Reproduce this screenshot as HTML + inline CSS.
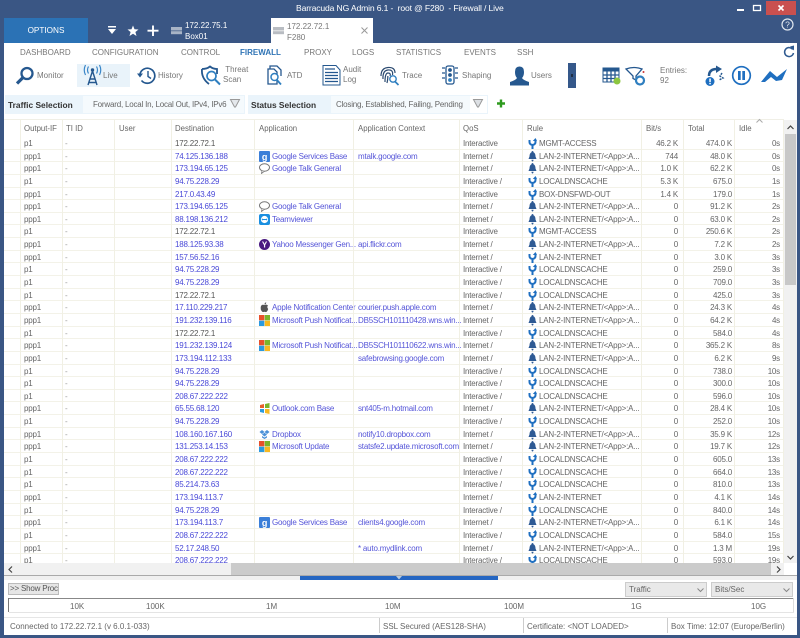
<!DOCTYPE html>
<html><head><meta charset="utf-8"><title>Barracuda NG Admin</title>
<style>
html,body{margin:0;padding:0;width:800px;height:638px;overflow:hidden;background:#3a5684}
body{position:relative;font-family:"Liberation Sans",sans-serif;font-size:8px;color:#666}
.a{position:absolute;white-space:nowrap}
svg{position:absolute;overflow:visible}
#main{position:absolute;left:4px;top:43px;width:793px;height:592px;background:#fff}
.m{position:absolute;top:48px;font-size:8px;color:#777;white-space:nowrap}
.t{position:absolute;font-size:8px;color:#777;white-space:nowrap;line-height:11px}
.v{position:absolute;top:120px;width:1px;height:443px;background:#f1f0e4}
.h{position:absolute;top:124px;font-size:7.8px;color:#666;white-space:nowrap}
#rows{position:absolute;left:0;top:137px;width:783px;height:426px;overflow:hidden;clip-path:inset(0 0 0 4px)}
.r{position:relative;height:12.65px;box-sizing:border-box;border-bottom:1px solid #f3f2e8;line-height:12px;font-size:8px;letter-spacing:-.2px;color:#666;width:783px;white-space:nowrap}
.r span{position:absolute;top:1px;white-space:nowrap}
.o{left:24px}.d{left:65px;color:#999}.i{left:175px;color:#4a4ad8}.k{left:175px;color:#555}
.p{left:272px;color:#5555d8}.c{left:358px;color:#5555d8}.q{left:463px}.u{left:539px}
.b{right:105px;color:#666}.g{right:51px}.e{right:3px}
.ri{position:absolute;left:528px;top:1px;width:9px;height:11px}
.ai{position:absolute;left:259px;top:1px;width:11px;height:11px}
.s{position:absolute;color:#666;font-size:8px;white-space:nowrap}
</style></head><body>
<svg width="0" height="0" style="position:absolute"><defs>
<symbol id="fork" viewBox="0 0 9 11"><path d="M1.500 2V4Q1.500 6.500 4.500 7V11M7.500 1.500V4Q7.500 6.500 4.500 7" fill="none" stroke="#1f6fc0" stroke-width="2"/><path d="M4.800 3 7.500 0 9 3Z" fill="#1f6fc0"/></symbol>
<symbol id="bell" viewBox="0 0 9 11"><path d="M4.500 0Q5.500 0 5.500 1.200 7.500 2 7.500 5.500L8.500 8H.5L1.500 5.500Q1.500 2 3.500 1.200 3.500 0 4.500 0ZM3.500 8.800H5.500Q5.500 10.500 4.500 10.500T3.500 8.800Z" fill="#2e5a94"/></symbol>
<symbol id="g" viewBox="0 0 11 11"><rect width="11" height="11" rx="1" fill="#3b7fd8"/><text x="5.500" y="9" font-size="9" font-weight="bold" fill="#fff" text-anchor="middle" font-family="Liberation Sans">g</text></symbol>
<symbol id="talk" viewBox="0 0 11 11"><ellipse cx="5.500" cy="4.500" rx="5" ry="3.700" fill="#fff" stroke="#777"/><path d="M3 8 2.500 10.500 5.500 8.200" fill="#fff" stroke="#777" stroke-width=".8"/></symbol>
<symbol id="ms" viewBox="0 0 11 11"><rect width="5.300" height="5.300" fill="#e8502a"/><rect x="5.700" width="5.300" height="5.300" fill="#7ab52a"/><rect y="5.700" width="5.300" height="5.300" fill="#2a9ae0"/><rect x="5.700" y="5.700" width="5.300" height="5.300" fill="#f8b820"/></symbol>
<symbol id="tv" viewBox="0 0 11 11"><rect width="11" height="11" rx="2" fill="#1a8fe0"/><circle cx="5.500" cy="5.500" r="3.600" fill="#fff"/><path d="M2.500 5.500 4 4.400V5H7V4.400L8.500 5.500 7 6.600V6H4V6.600Z" fill="#1a8fe0"/></symbol>
<symbol id="y" viewBox="0 0 11 11"><circle cx="5.500" cy="5.500" r="5.500" fill="#4a1a80"/><text x="5.500" y="8.500" font-size="8" font-weight="bold" fill="#fff" text-anchor="middle" font-family="Liberation Sans">Y</text></symbol>
<symbol id="ap" viewBox="0 0 11 11"><path d="M5.500 3Q7.500 2 9 3.500 7.500 5 9.200 7 8 10.500 6.500 10 5.500 9.500 4.500 10 3 10.500 1.800 7.500 1.200 3.500 3.500 2.800 4.500 2.700 5.500 3ZM5.500 2.500Q5.500 .8 7.200 .3 7.300 2.200 5.500 2.500Z" fill="#555"/></symbol>
<symbol id="ol" viewBox="0 0 11 11"><path d="M1 2 5 1V5H1Z" fill="#e8602a"/><path d="M6 1 10.500 0V5H6Z" fill="#7ab52a"/><path d="M1 6H5V10L1 9Z" fill="#2a9ae0"/><path d="M6 6H10.500V11L6 10Z" fill="#f8b820"/></symbol>
<symbol id="db" viewBox="0 0 11 11"><path d="M3 1 5.500 3 3 5 .5 3ZM8 1 10.500 3 8 5 5.500 3ZM3 5.500 5.500 3.800 8 5.500 5.500 7.500ZM3 7 5.500 8.500 8 7V8.500L5.500 10 3 8.500Z" fill="#4a90d8"/></symbol>
</defs></svg>

<!-- title bar -->
<div class="a" style="left:296px;top:3px;font-size:8.600px;letter-spacing:-.15px;color:#fff">Barracuda NG Admin 6.1 -&nbsp; root @ F280&nbsp; - Firewall / Live</div>
<div class="a" style="left:766px;top:1px;width:30px;height:14px;background:#c9504f"></div>
<svg style="left:736px;top:5px" width="50" height="8" viewBox="0 0 50 8"><rect x="1" y="4" width="7" height="2" fill="#fff"/><rect x="17.500" y="0.500" width="7" height="5" fill="none" stroke="#fff" stroke-width="1.300"/><path d="M42.500 .5 47.500 5.500M47.500 .5 42.500 5.500" stroke="#fff" stroke-width="1.600"/></svg>
<svg style="left:781px;top:18px" width="13" height="13" viewBox="0 0 13 13"><circle cx="6.500" cy="6.500" r="5.500" fill="none" stroke="#dfe6ee" stroke-width="1.200"/><text x="6.500" y="9.700" font-size="8.500" fill="#dfe6ee" text-anchor="middle">?</text></svg>

<!-- tabs -->
<div class="a" style="left:4px;top:18px;width:84px;height:25px;background:#2b72b5;color:#fff;text-align:center;line-height:25px;font-size:8.200px">OPTIONS</div>
<svg style="left:107px;top:25px" width="54" height="12" viewBox="0 0 54 12"><path d="M1 1H9V2.500H1ZM1 4H9L5 9Z" fill="#fff"/><path d="M26 .5 27.500 4.300 31.500 4.500 28.400 7 29.500 11 26 8.800 22.500 11 23.600 7 20.500 4.500 24.500 4.300Z" fill="#fff"/><path d="M46 .5V11M40.500 5.700H51.500" stroke="#fff" stroke-width="1.900"/></svg>
<svg style="left:171px;top:26px" width="11" height="9" viewBox="0 0 11 9"><rect width="11" height="3.500" y="1" fill="#a8b4c6"/><rect width="11" height="3" y="5.200" fill="#a8b4c6"/></svg>
<div class="t" style="left:185px;top:20px;color:#fff">172.22.75.1<br>Box01</div>
<div class="a" style="left:271px;top:18px;width:102px;height:25px;background:#fff"></div>
<svg style="left:273px;top:26px" width="11" height="9" viewBox="0 0 11 9"><rect width="11" height="3.500" y="1" fill="#b8bcc2"/><rect width="11" height="3" y="5.200" fill="#b8bcc2"/></svg>
<div class="t" style="left:287px;top:21px;color:#777">172.22.72.1<br>F280</div>
<svg style="left:361px;top:27px" width="7" height="7" viewBox="0 0 7 7"><path d="M.5 .5 6.500 6.500M6.500 .5 .5 6.500" stroke="#999" stroke-width="1"/></svg>

<div id="main"></div>

<!-- menu -->
<div class="m" style="left:20px">DASHBOARD</div>
<div class="m" style="left:92px">CONFIGURATION</div>
<div class="m" style="left:181px">CONTROL</div>
<div class="m" style="left:240px;color:#2f74b5;font-weight:bold">FIREWALL</div>
<div class="m" style="left:304px">PROXY</div>
<div class="m" style="left:352px">LOGS</div>
<div class="m" style="left:396px">STATISTICS</div>
<div class="m" style="left:464px">EVENTS</div>
<div class="m" style="left:517px">SSH</div>
<svg style="left:783px;top:45px" width="12" height="13" viewBox="0 0 12 13"><path d="M9.800 4.500A4.500 4.500 0 1 0 10.500 8" fill="none" stroke="#2f5a90" stroke-width="1.500"/><path d="M7 1.500 11 .5V5.500Z" fill="#2f5a90"/></svg>

<!-- toolbar -->
<div class="a" style="left:77px;top:64px;width:53px;height:23px;background:#e9f3fa"></div>
<svg style="left:15px;top:66px" width="20" height="20" viewBox="0 0 20 20"><circle cx="12" cy="7.500" r="5.500" fill="none" stroke="#25588f" stroke-width="2.300"/><path d="M8 11.500 2 17.500" stroke="#25588f" stroke-width="3.200"/></svg>
<div class="t" style="left:37px;top:70px">Monitor</div>
<svg style="left:83px;top:65px" width="19" height="21" viewBox="0 0 19 21"><path d="M9.500 6 5 20M9.500 6 14 20M7 14H12M6 17.500H13" fill="none" stroke="#25588f" stroke-width="1.400"/><circle cx="9.500" cy="5" r="1.700" fill="#25588f"/><path d="M5.500 1.500Q3.500 5 5.500 8.500M13.500 1.500Q15.500 5 13.500 8.500M2.500 0Q0 5 2.500 10M16.500 0Q19 5 16.500 10" fill="none" stroke="#3a86c8" stroke-width="1.200"/></svg>
<div class="t" style="left:103px;top:70px">Live</div>
<svg style="left:137px;top:66px" width="20" height="20" viewBox="0 0 20 20"><path d="M3 8A7.500 7.500 0 1 1 4.500 14.500" fill="none" stroke="#25588f" stroke-width="1.700"/><path d="M0 7.500H6L3 11.500Z" fill="#25588f"/><path d="M11 5V10.500L14 12.500" fill="none" stroke="#25588f" stroke-width="1.400"/></svg>
<div class="t" style="left:158px;top:70px">History</div>
<svg style="left:201px;top:66px" width="21" height="20" viewBox="0 0 21 20"><path d="M1 3Q6 3 9 .5 12 3 16 3V8" fill="none" stroke="#25588f" stroke-width="1.800"/><path d="M1 3Q0 12 8 18" fill="none" stroke="#25588f" stroke-width="1.800"/><circle cx="10.500" cy="10" r="4.500" fill="none" stroke="#2f7fc0" stroke-width="1.700"/><path d="M14 13.500 19 18.500" stroke="#2f7fc0" stroke-width="2"/></svg>
<div class="t" style="left:223px;top:65px;line-height:10px">&nbsp;Threat<br>Scan</div>
<svg style="left:266px;top:65px" width="18" height="21" viewBox="0 0 18 21"><path d="M4 4V1H11L15 5V11M2 4H8L11 7V19H2Z" fill="none" stroke="#25588f" stroke-width="1.300"/><circle cx="8.500" cy="12" r="3.500" fill="#fff" stroke="#2f7fc0" stroke-width="1.500"/><path d="M11 15 15 19.500" stroke="#2f7fc0" stroke-width="1.800"/></svg>
<div class="t" style="left:287px;top:70px">ATD</div>
<svg style="left:322px;top:65px" width="19" height="21" viewBox="0 0 19 21"><path d="M1 .5H14L18 5V20H1Z" fill="#fff" stroke="#25588f" stroke-width="1"/><path d="M3 4H13M3 7.500H16M3 10.500H16M3 13.500H16M3 16.500H16" stroke="#25588f" stroke-width="1.200"/></svg>
<div class="t" style="left:343px;top:65px;line-height:10px">Audit<br>Log</div>
<svg style="left:380px;top:66px" width="20" height="20" viewBox="0 0 20 20"><path d="M1 10Q1 2 8 1.500T15 7M3 13Q2.500 4.500 8 4T12.500 9M5 16Q5 7 8 7T10 10M7 17Q8 13 7.800 10" fill="none" stroke="#2b4a70" stroke-width="1.200"/><circle cx="13" cy="13" r="3.200" fill="#fff" stroke="#2f7fc0" stroke-width="1.400"/><path d="M15 15.500 18.500 19" stroke="#2f7fc0" stroke-width="1.700"/></svg>
<div class="t" style="left:402px;top:70px">Trace</div>
<svg style="left:441px;top:65px" width="18" height="20" viewBox="0 0 18 20"><rect x="5" y="1" width="8" height="18" rx="2" fill="#fff" stroke="#25588f" stroke-width="1.300"/><circle cx="9" cy="5" r="1.900" fill="#25588f"/><circle cx="9" cy="10" r="1.900" fill="#25588f"/><circle cx="9" cy="15" r="1.900" fill="#2f7fc0"/><path d="M1 3H4M1 8H4M1 13H4M14 3H17M14 8H17M14 13H17" stroke="#25588f" stroke-width="1.200"/></svg>
<div class="t" style="left:462px;top:70px">Shaping</div>
<svg style="left:509px;top:66px" width="21" height="20" viewBox="0 0 21 20"><path d="M10.500 .5Q15 .5 15 6 15 10 13 12 14 14 20 16V19.500H1V16Q7 14 8 12 6 10 6 6 6 .5 10.500 .5Z" fill="#25588f"/></svg>
<div class="t" style="left:531px;top:70px">Users</div>
<div class="a" style="left:568px;top:63px;width:8px;height:25px;background:#35588a"></div>
<div class="a" style="left:571px;top:74px;width:2px;height:3px;background:#1e2e44"></div>
<svg style="left:602px;top:67px" width="19" height="18" viewBox="0 0 19 18"><rect x="1" y="1" width="16" height="14" fill="#fff" stroke="#25588f"/><rect x="1" y="1" width="16" height="3.500" fill="#25588f"/><path d="M1 8H17M1 11.500H17M5 4V15M9 4V15M13 4V15" stroke="#25588f" stroke-width="1.300"/><circle cx="15" cy="14" r="3.500" fill="#8cc63f"/></svg>
<svg style="left:625px;top:67px" width="21" height="20" viewBox="0 0 21 20"><path d="M1 2Q9 -1 17 2L11 9V13L8 11.500V9Z" fill="#fff" stroke="#25588f" stroke-width="1.300"/><circle cx="15" cy="13.500" r="4" fill="#fff" stroke="#2f7fc0" stroke-width="2.200"/><circle cx="18.500" cy="5" r="1" fill="#c33"/></svg>
<div class="t" style="left:660px;top:66px;line-height:9.500px">Entries:<br>92</div>
<svg style="left:705px;top:65px" width="20" height="22" viewBox="0 0 20 22"><path d="M4 11Q4 4 12 4" fill="none" stroke="#25588f" stroke-width="2.500"/><path d="M11 .5 17 4 11 8Z" fill="#25588f"/><circle cx="5" cy="16.500" r="4.500" fill="#1f6fc0"/><rect x="4.300" y="13.500" width="1.500" height="3.700" fill="#fff"/><rect x="4.300" y="18" width="1.500" height="1.300" fill="#fff"/><path d="M17 8 15 11 18 13 14 15" fill="none" stroke="#25588f" stroke-width="1.500" stroke-dasharray="2 1"/></svg>
<svg style="left:731px;top:65px" width="21" height="21" viewBox="0 0 21 21"><circle cx="10.500" cy="10.500" r="8.800" fill="none" stroke="#1f6fc0" stroke-width="1.700"/><rect x="7" y="6" width="2.700" height="9" fill="#1f6fc0"/><rect x="11.300" y="6" width="2.700" height="9" fill="#1f6fc0"/></svg>
<svg style="left:761px;top:68px" width="27" height="15" viewBox="0 0 27 15"><path d="M0 14 9 3 16 9 26 1 21 12 15 13 10 9 4 14Z" fill="#1f6fc0"/></svg>

<!-- selection bars -->
<div class="a" style="left:5px;top:95px;width:240px;height:19px;background:#eaf4fb"></div>
<div class="a" style="left:248px;top:95px;width:240px;height:19px;background:#eaf4fb"></div>
<div class="a" style="left:83px;top:96px;width:161px;height:17px;background:#f5fafd"></div>
<div class="a" style="left:331px;top:96px;width:139px;height:17px;background:#f5fafd"></div>
<div class="a" style="left:470px;top:96px;width:17px;height:17px;background:#fff"></div>
<div class="a" style="left:8px;top:100px;font-size:8.400px;font-weight:bold;color:#333">Traffic Selection</div>
<div class="a" style="left:251px;top:100px;font-size:8.400px;font-weight:bold;color:#333">Status Selection</div>
<div class="a" style="left:93px;top:100px;font-size:8px;letter-spacing:-.2px;color:#666">Forward, Local In, Local Out, IPv4, IPv6</div>
<div class="a" style="left:336px;top:100px;font-size:8px;letter-spacing:-.2px;color:#666">Closing, Established, Failing, Pending</div>
<svg style="left:230px;top:99px" width="10" height="9" viewBox="0 0 10 9"><path d="M.5 .5H9.500L5.500 8H4.500Z" fill="#e4e8ec" stroke="#999"/></svg>
<svg style="left:473px;top:99px" width="10" height="9" viewBox="0 0 10 9"><path d="M.5 .5H9.500L5.500 8H4.500Z" fill="#dde0e4" stroke="#999"/></svg>
<svg style="left:497px;top:99px" width="8" height="9" viewBox="0 0 8 9"><path d="M2.800 .5H5.200V3.200H8V5.800H5.200V8.500H2.800V5.800H0V3.200H2.800Z" fill="#2e9a1e"/></svg>

<!-- grid head -->
<div class="a" style="left:4px;top:119px;width:780px;height:1px;background:#f0efe6"></div>
<div class="h" style="left:24px">Output-IF</div>
<div class="h" style="left:66px">TI ID</div>
<div class="h" style="left:119px">User</div>
<div class="h" style="left:175px">Destination</div>
<div class="h" style="left:259px">Application</div>
<div class="h" style="left:358px">Application Context</div>
<div class="h" style="left:463px">QoS</div>
<div class="h" style="left:527px">Rule</div>
<div class="h" style="left:646px">Bit/s</div>
<div class="h" style="left:688px">Total</div>
<div class="h" style="left:739px">Idle</div>
<svg style="left:756px;top:119px" width="7" height="4" viewBox="0 0 7 4"><path d="M.5 3.500 3.500 .5 6.500 3.500" fill="none" stroke="#aaa"/></svg>

<div id="rows">
<div class="r"><span class="o">p1</span><span class="d">-</span><span class="k">172.22.72.1</span><span class="q">Interactive</span><svg class="ri"><use href="#fork"/></svg><span class="u">MGMT-ACCESS</span><span class="b">46.2 K</span><span class="g">474.0 K</span><span class="e">0s</span></div>
<div class="r"><span class="o">ppp1</span><span class="d">-</span><span class="i">74.125.136.188</span><svg class="ai"><use href="#g"/></svg><span class="p">Google Services Base</span><span class="c">mtalk.google.com</span><span class="q">Internet /</span><svg class="ri"><use href="#bell"/></svg><span class="u">LAN-2-INTERNET/&lt;App&gt;:A...</span><span class="b">744</span><span class="g">48.0 K</span><span class="e">0s</span></div>
<div class="r"><span class="o">ppp1</span><span class="d">-</span><span class="i">173.194.65.125</span><svg class="ai"><use href="#talk"/></svg><span class="p">Google Talk General</span><span class="q">Internet /</span><svg class="ri"><use href="#bell"/></svg><span class="u">LAN-2-INTERNET/&lt;App&gt;:A...</span><span class="b">1.0 K</span><span class="g">62.2 K</span><span class="e">0s</span></div>
<div class="r"><span class="o">p1</span><span class="d">-</span><span class="i">94.75.228.29</span><span class="q">Interactive /</span><svg class="ri"><use href="#fork"/></svg><span class="u">LOCALDNSCACHE</span><span class="b">5.3 K</span><span class="g">675.0</span><span class="e">1s</span></div>
<div class="r"><span class="o">ppp1</span><span class="d">-</span><span class="i">217.0.43.49</span><span class="q">Interactive</span><svg class="ri"><use href="#fork"/></svg><span class="u">BOX-DNSFWD-OUT</span><span class="b">1.4 K</span><span class="g">179.0</span><span class="e">1s</span></div>
<div class="r"><span class="o">ppp1</span><span class="d">-</span><span class="i">173.194.65.125</span><svg class="ai"><use href="#talk"/></svg><span class="p">Google Talk General</span><span class="q">Internet /</span><svg class="ri"><use href="#bell"/></svg><span class="u">LAN-2-INTERNET/&lt;App&gt;:A...</span><span class="b">0</span><span class="g">91.2 K</span><span class="e">2s</span></div>
<div class="r"><span class="o">ppp1</span><span class="d">-</span><span class="i">88.198.136.212</span><svg class="ai"><use href="#tv"/></svg><span class="p">Teamviewer</span><span class="q">Internet /</span><svg class="ri"><use href="#bell"/></svg><span class="u">LAN-2-INTERNET/&lt;App&gt;:A...</span><span class="b">0</span><span class="g">63.0 K</span><span class="e">2s</span></div>
<div class="r"><span class="o">p1</span><span class="d">-</span><span class="k">172.22.72.1</span><span class="q">Interactive</span><svg class="ri"><use href="#fork"/></svg><span class="u">MGMT-ACCESS</span><span class="b">0</span><span class="g">250.6 K</span><span class="e">2s</span></div>
<div class="r"><span class="o">ppp1</span><span class="d">-</span><span class="i">188.125.93.38</span><svg class="ai"><use href="#y"/></svg><span class="p">Yahoo Messenger Gen...</span><span class="c">api.flickr.com</span><span class="q">Internet /</span><svg class="ri"><use href="#bell"/></svg><span class="u">LAN-2-INTERNET/&lt;App&gt;:A...</span><span class="b">0</span><span class="g">7.2 K</span><span class="e">2s</span></div>
<div class="r"><span class="o">ppp1</span><span class="d">-</span><span class="i">157.56.52.16</span><span class="q">Internet /</span><svg class="ri"><use href="#fork"/></svg><span class="u">LAN-2-INTERNET</span><span class="b">0</span><span class="g">3.0 K</span><span class="e">3s</span></div>
<div class="r"><span class="o">p1</span><span class="d">-</span><span class="i">94.75.228.29</span><span class="q">Interactive /</span><svg class="ri"><use href="#fork"/></svg><span class="u">LOCALDNSCACHE</span><span class="b">0</span><span class="g">259.0</span><span class="e">3s</span></div>
<div class="r"><span class="o">p1</span><span class="d">-</span><span class="i">94.75.228.29</span><span class="q">Interactive /</span><svg class="ri"><use href="#fork"/></svg><span class="u">LOCALDNSCACHE</span><span class="b">0</span><span class="g">709.0</span><span class="e">3s</span></div>
<div class="r"><span class="o">p1</span><span class="d">-</span><span class="k">172.22.72.1</span><span class="q">Interactive /</span><svg class="ri"><use href="#fork"/></svg><span class="u">LOCALDNSCACHE</span><span class="b">0</span><span class="g">425.0</span><span class="e">3s</span></div>
<div class="r"><span class="o">ppp1</span><span class="d">-</span><span class="i">17.110.229.217</span><svg class="ai"><use href="#ap"/></svg><span class="p">Apple Notification Center</span><span class="c">courier.push.apple.com</span><span class="q">Internet /</span><svg class="ri"><use href="#bell"/></svg><span class="u">LAN-2-INTERNET/&lt;App&gt;:A...</span><span class="b">0</span><span class="g">24.3 K</span><span class="e">4s</span></div>
<div class="r"><span class="o">ppp1</span><span class="d">-</span><span class="i">191.232.139.116</span><svg class="ai"><use href="#ms"/></svg><span class="p">Microsoft Push Notificat...</span><span class="c">DB5SCH101110428.wns.win...</span><span class="q">Internet /</span><svg class="ri"><use href="#bell"/></svg><span class="u">LAN-2-INTERNET/&lt;App&gt;:A...</span><span class="b">0</span><span class="g">64.2 K</span><span class="e">4s</span></div>
<div class="r"><span class="o">p1</span><span class="d">-</span><span class="k">172.22.72.1</span><span class="q">Interactive /</span><svg class="ri"><use href="#fork"/></svg><span class="u">LOCALDNSCACHE</span><span class="b">0</span><span class="g">584.0</span><span class="e">4s</span></div>
<div class="r"><span class="o">ppp1</span><span class="d">-</span><span class="i">191.232.139.124</span><svg class="ai"><use href="#ms"/></svg><span class="p">Microsoft Push Notificat...</span><span class="c">DB5SCH101110622.wns.win...</span><span class="q">Internet /</span><svg class="ri"><use href="#bell"/></svg><span class="u">LAN-2-INTERNET/&lt;App&gt;:A...</span><span class="b">0</span><span class="g">365.2 K</span><span class="e">8s</span></div>
<div class="r"><span class="o">ppp1</span><span class="d">-</span><span class="i">173.194.112.133</span><span class="c">safebrowsing.google.com</span><span class="q">Internet /</span><svg class="ri"><use href="#bell"/></svg><span class="u">LAN-2-INTERNET/&lt;App&gt;:A...</span><span class="b">0</span><span class="g">6.2 K</span><span class="e">9s</span></div>
<div class="r"><span class="o">p1</span><span class="d">-</span><span class="i">94.75.228.29</span><span class="q">Interactive /</span><svg class="ri"><use href="#fork"/></svg><span class="u">LOCALDNSCACHE</span><span class="b">0</span><span class="g">738.0</span><span class="e">10s</span></div>
<div class="r"><span class="o">p1</span><span class="d">-</span><span class="i">94.75.228.29</span><span class="q">Interactive /</span><svg class="ri"><use href="#fork"/></svg><span class="u">LOCALDNSCACHE</span><span class="b">0</span><span class="g">300.0</span><span class="e">10s</span></div>
<div class="r"><span class="o">p1</span><span class="d">-</span><span class="i">208.67.222.222</span><span class="q">Interactive /</span><svg class="ri"><use href="#fork"/></svg><span class="u">LOCALDNSCACHE</span><span class="b">0</span><span class="g">596.0</span><span class="e">10s</span></div>
<div class="r"><span class="o">ppp1</span><span class="d">-</span><span class="i">65.55.68.120</span><svg class="ai"><use href="#ol"/></svg><span class="p">Outlook.com Base</span><span class="c">snt405-m.hotmail.com</span><span class="q">Internet /</span><svg class="ri"><use href="#bell"/></svg><span class="u">LAN-2-INTERNET/&lt;App&gt;:A...</span><span class="b">0</span><span class="g">28.4 K</span><span class="e">10s</span></div>
<div class="r"><span class="o">p1</span><span class="d">-</span><span class="i">94.75.228.29</span><span class="q">Interactive /</span><svg class="ri"><use href="#fork"/></svg><span class="u">LOCALDNSCACHE</span><span class="b">0</span><span class="g">252.0</span><span class="e">10s</span></div>
<div class="r"><span class="o">ppp1</span><span class="d">-</span><span class="i">108.160.167.160</span><svg class="ai"><use href="#db"/></svg><span class="p">Dropbox</span><span class="c">notify10.dropbox.com</span><span class="q">Internet /</span><svg class="ri"><use href="#bell"/></svg><span class="u">LAN-2-INTERNET/&lt;App&gt;:A...</span><span class="b">0</span><span class="g">35.9 K</span><span class="e">12s</span></div>
<div class="r"><span class="o">ppp1</span><span class="d">-</span><span class="i">131.253.14.153</span><svg class="ai"><use href="#ms"/></svg><span class="p">Microsoft Update</span><span class="c">statsfe2.update.microsoft.com</span><span class="q">Internet /</span><svg class="ri"><use href="#bell"/></svg><span class="u">LAN-2-INTERNET/&lt;App&gt;:A...</span><span class="b">0</span><span class="g">19.7 K</span><span class="e">12s</span></div>
<div class="r"><span class="o">p1</span><span class="d">-</span><span class="i">208.67.222.222</span><span class="q">Interactive /</span><svg class="ri"><use href="#fork"/></svg><span class="u">LOCALDNSCACHE</span><span class="b">0</span><span class="g">605.0</span><span class="e">13s</span></div>
<div class="r"><span class="o">p1</span><span class="d">-</span><span class="i">208.67.222.222</span><span class="q">Interactive /</span><svg class="ri"><use href="#fork"/></svg><span class="u">LOCALDNSCACHE</span><span class="b">0</span><span class="g">664.0</span><span class="e">13s</span></div>
<div class="r"><span class="o">p1</span><span class="d">-</span><span class="i">85.214.73.63</span><span class="q">Interactive /</span><svg class="ri"><use href="#fork"/></svg><span class="u">LOCALDNSCACHE</span><span class="b">0</span><span class="g">810.0</span><span class="e">13s</span></div>
<div class="r"><span class="o">ppp1</span><span class="d">-</span><span class="i">173.194.113.7</span><span class="q">Internet /</span><svg class="ri"><use href="#fork"/></svg><span class="u">LAN-2-INTERNET</span><span class="b">0</span><span class="g">4.1 K</span><span class="e">14s</span></div>
<div class="r"><span class="o">p1</span><span class="d">-</span><span class="i">94.75.228.29</span><span class="q">Interactive /</span><svg class="ri"><use href="#fork"/></svg><span class="u">LOCALDNSCACHE</span><span class="b">0</span><span class="g">840.0</span><span class="e">14s</span></div>
<div class="r"><span class="o">ppp1</span><span class="d">-</span><span class="i">173.194.113.7</span><svg class="ai"><use href="#g"/></svg><span class="p">Google Services Base</span><span class="c">clients4.google.com</span><span class="q">Internet /</span><svg class="ri"><use href="#bell"/></svg><span class="u">LAN-2-INTERNET/&lt;App&gt;:A...</span><span class="b">0</span><span class="g">6.1 K</span><span class="e">14s</span></div>
<div class="r"><span class="o">p1</span><span class="d">-</span><span class="i">208.67.222.222</span><span class="q">Interactive /</span><svg class="ri"><use href="#fork"/></svg><span class="u">LOCALDNSCACHE</span><span class="b">0</span><span class="g">584.0</span><span class="e">15s</span></div>
<div class="r"><span class="o">ppp1</span><span class="d">-</span><span class="i">52.17.248.50</span><span class="c">* auto.mydlink.com</span><span class="q">Internet /</span><svg class="ri"><use href="#bell"/></svg><span class="u">LAN-2-INTERNET/&lt;App&gt;:A...</span><span class="b">0</span><span class="g">1.3 M</span><span class="e">19s</span></div>
<div class="r"><span class="o">p1</span><span class="d">-</span><span class="i">208.67.222.222</span><span class="q">Interactive /</span><svg class="ri"><use href="#fork"/></svg><span class="u">LOCALDNSCACHE</span><span class="b">0</span><span class="g">593.0</span><span class="e">19s</span></div>
</div>

<!-- column lines -->
<div class="v" style="left:20px"></div><div class="v" style="left:62px"></div><div class="v" style="left:114px"></div><div class="v" style="left:171px"></div><div class="v" style="left:254px"></div><div class="v" style="left:353px"></div><div class="v" style="left:459px"></div><div class="v" style="left:522px"></div><div class="v" style="left:641px"></div><div class="v" style="left:683px"></div><div class="v" style="left:734px"></div><div class="v" style="left:783px"></div>

<!-- vertical scrollbar -->
<div class="a" style="left:784px;top:120px;width:13px;height:443px;background:#f1f1f1"></div>
<div class="a" style="left:785px;top:134px;width:11px;height:151px;background:#c8c8c8"></div>
<svg style="left:787px;top:125px" width="7" height="5" viewBox="0 0 7 5"><path d="M.5 4 3.500 1 6.500 4" fill="none" stroke="#444" stroke-width="1.200"/></svg>
<svg style="left:787px;top:555px" width="7" height="5" viewBox="0 0 7 5"><path d="M.5 1 3.500 4 6.500 1" fill="none" stroke="#444" stroke-width="1.200"/></svg>

<!-- horizontal scrollbar -->
<div class="a" style="left:4px;top:563px;width:780px;height:12px;background:#f1f1f1"></div>
<div class="a" style="left:231px;top:563px;width:540px;height:12px;background:#cbcbcb"></div>
<svg style="left:8px;top:566px" width="5" height="7" viewBox="0 0 5 7"><path d="M4 .5 1 3.500 4 6.500" fill="none" stroke="#444" stroke-width="1.200"/></svg>
<svg style="left:776px;top:566px" width="5" height="7" viewBox="0 0 5 7"><path d="M1 .5 4 3.500 1 6.500" fill="none" stroke="#444" stroke-width="1.200"/></svg>

<!-- splitter -->
<div class="a" style="left:4px;top:575px;width:793px;height:1px;background:#aaa"></div>
<div class="a" style="left:4px;top:576px;width:793px;height:4px;background:#f0f0f0"></div>
<div class="a" style="left:300px;top:576px;width:198px;height:4px;background:#2566c2"></div>
<svg style="left:396px;top:576px" width="6" height="4" viewBox="0 0 6 4"><path d="M0 0H6L3 3.500Z" fill="#bcd"/></svg>

<!-- bottom controls -->
<div class="a" style="left:8px;top:583px;width:51px;height:12px;background:#e6e6e6;border:1px solid #bbb;box-sizing:border-box;font-size:8px;letter-spacing:-.2px;line-height:10px;color:#555;padding-left:1px">&gt;&gt; Show Proc</div>
<div class="a" style="left:625px;top:582px;width:82px;height:15px;background:#e9e9e9;border:1px solid #ccc;box-sizing:border-box;font-size:8px;line-height:13px;color:#666;padding-left:3px">Traffic</div>
<div class="a" style="left:711px;top:582px;width:82px;height:15px;background:#e9e9e9;border:1px solid #ccc;box-sizing:border-box;font-size:8px;line-height:13px;color:#666;padding-left:3px">Bits/Sec</div>
<svg style="left:697px;top:588px" width="7" height="4" viewBox="0 0 7 4"><path d="M.5 .5 3.500 3.500 6.500 .5" fill="none" stroke="#888"/></svg>
<svg style="left:783px;top:588px" width="7" height="4" viewBox="0 0 7 4"><path d="M.5 .5 3.500 3.500 6.500 .5" fill="none" stroke="#888"/></svg>

<!-- gauge -->
<div class="a" style="left:8px;top:598px;width:785px;height:1px;background:#888"></div>
<div class="a" style="left:8px;top:598px;width:1px;height:14px;background:#777"></div>
<div class="a" style="left:793px;top:598px;width:1px;height:14px;background:#ddd"></div>
<div class="a" style="left:9px;top:612px;width:785px;height:1px;background:#e4e4e4"></div>
<div class="s" style="left:70px;top:602px">10K</div>
<div class="s" style="left:146px;top:602px">100K</div>
<div class="s" style="left:266px;top:602px">1M</div>
<div class="s" style="left:385px;top:602px">10M</div>
<div class="s" style="left:504px;top:602px">100M</div>
<div class="s" style="left:631px;top:602px">1G</div>
<div class="s" style="left:751px;top:602px">10G</div>

<!-- status bar -->
<div class="a" style="left:4px;top:617px;width:793px;height:1px;background:#e6e6e6"></div>
<div class="a" style="left:379px;top:618px;width:1px;height:15px;background:#ccc"></div>
<div class="a" style="left:523px;top:618px;width:1px;height:15px;background:#ccc"></div>
<div class="a" style="left:667px;top:618px;width:1px;height:15px;background:#ccc"></div>
<div class="s" style="left:10px;top:622px">Connected to 172.22.72.1 (v 6.0.1-033)</div>
<div class="s" style="left:383px;top:622px">SSL Secured (AES128-SHA)</div>
<div class="s" style="left:527px;top:622px">Certificate: &lt;NOT LOADED&gt;</div>
<div class="s" style="left:671px;top:622px">Box Time: 12:07 (Europe/Berlin)</div>
</body></html>
